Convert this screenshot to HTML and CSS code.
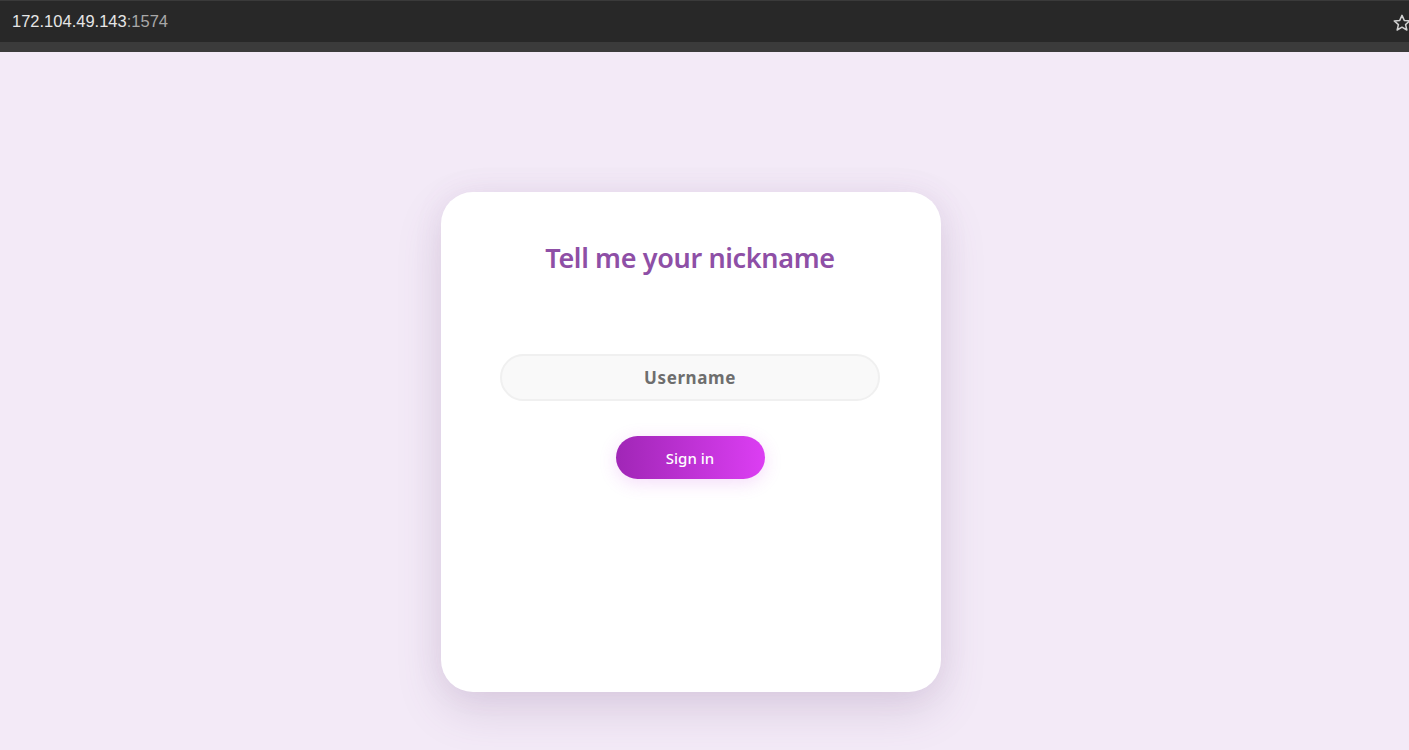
FILE: index.html
```html
<!DOCTYPE html>
<html lang="en">
<head>
<meta charset="utf-8">
<title>Tell me your nickname</title>
<link rel="stylesheet" href="styles.css">
</head>
<body>
<div class="chrome">
  <div class="addr"><span class="host">172.104.49.143</span><span class="port">:1574</span></div>
  <svg class="star" viewBox="0 0 24 24" width="20" height="20"><path d="M12 2.8l2.7 6.1 6.6.6-5 4.4 1.5 6.5L12 17l-5.8 3.4 1.5-6.5-5-4.4 6.6-.6z" fill="none" stroke="#d0d0d0" stroke-width="1.8" stroke-linejoin="round"/></svg>
</div>
<div class="strip"></div>
<main class="page">
  <section class="card">
    <h1 class="title">Tell me your nickname</h1>
    <form class="form" onsubmit="return false">
      <input class="field" type="text" placeholder="Username">
      <button class="btn" type="submit">Sign in</button>
    </form>
  </section>
</main>
</body>
</html>
```
FILE: styles.css
```css
html, body {
  margin: 0;
  padding: 0;
  height: 100%;
  overflow: hidden;
}
body {
  background: #f3eaf7;
  font-family: "Noto Sans", "Open Sans", sans-serif;
}
.chrome {
  height: 42px;
  background: #282828;
  border-top: 1px solid #3a3a3a;
  box-sizing: border-box;
  display: flex;
  align-items: center;
  justify-content: space-between;
  padding: 0 0 0 12px;
}
.addr {
  font-family: "Liberation Sans", Arial, sans-serif;
  font-size: 16.5px;
  color: #e6e6e6;
}
.port { color: #a8a8a8; }
.star {
  margin-right: -3px;
  margin-top: 2px;
}
.strip {
  height: 10px;
  background: #3b3b3b;
}
.page {
  display: flex;
  justify-content: center;
  padding: 140px 27px 0 0;
}
.card {
  width: 500px;
  height: 500px;
  box-sizing: border-box;
  background: #fff;
  border-radius: 32px;
  box-shadow: 0 18px 45px rgba(110, 80, 130, 0.18), 0 0 30px rgba(150, 110, 170, 0.08);
  display: flex;
  flex-direction: column;
  align-items: center;
  padding: 46px 2px 0 0;
}
.title {
  margin: 0;
  font-size: 27px;
  font-weight: 600;
  color: #8e4fa6;
  letter-spacing: -0.35px;
  line-height: 40px;
}
.form {
  margin-top: 76px;
  display: flex;
  flex-direction: column;
  align-items: center;
}
.field {
  width: 380px;
  height: 47px;
  box-sizing: border-box;
  border: 2px solid #f0f0f0;
  background: #f9f9f9;
  border-radius: 30px;
  text-align: center;
  font-family: inherit;
  font-size: 17px;
  font-weight: 700;
  letter-spacing: 0.6px;
  color: #555;
  outline: none;
}
.field::placeholder { color: #6e6e6e; }
.btn {
  margin-top: 35px;
  width: 149px;
  height: 43px;
  border: none;
  border-radius: 30px;
  background: linear-gradient(90deg, #a026b6 0%, #dc3ef3 100%);
  color: #fff;
  font-family: inherit;
  font-size: 15px;
  font-weight: 500;
  box-shadow: 0 4px 18px rgba(200, 60, 230, 0.18);
  cursor: pointer;
}
```
